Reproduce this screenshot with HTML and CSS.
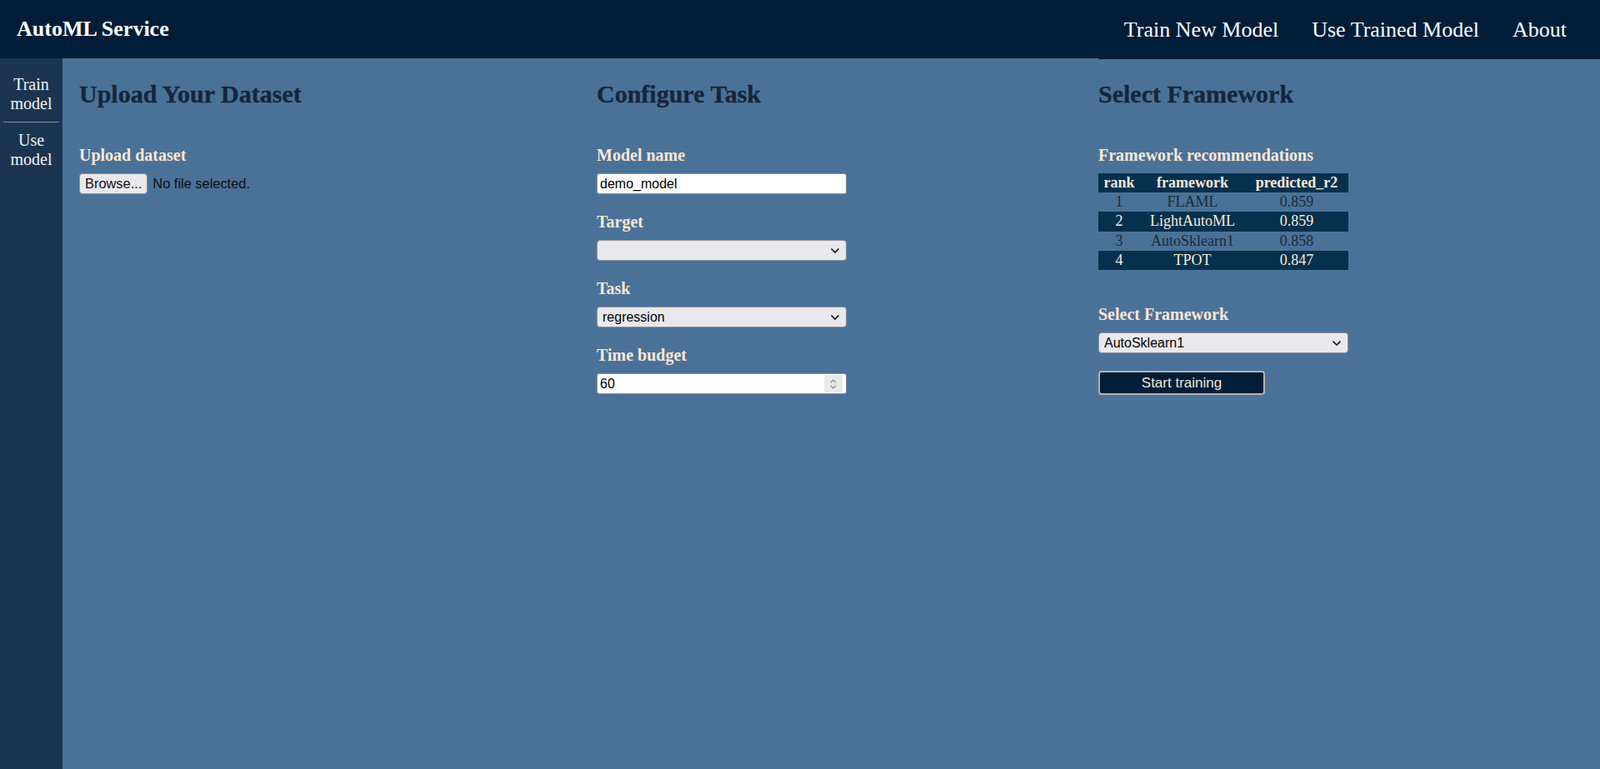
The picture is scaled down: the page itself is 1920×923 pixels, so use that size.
FILE: index.html
```html
<!DOCTYPE html>
<html lang="en">
<head>
<meta charset="utf-8">
<title>AutoML Service</title>
<link rel="stylesheet" href="styles.css">
</head>
<body>
<header class="topbar">
  <div class="brand">AutoML Service</div>
  <nav class="topnav">
    <a class="topnav-link" href="#">Train New Model</a>
    <a class="topnav-link" href="#">Use Trained Model</a>
    <a class="topnav-link" href="#">About</a>
  </nav>
</header>
<div class="layout">
  <aside class="sidebar">
    <a class="side-item side-item--sep" href="#">Train<br>model</a>
    <a class="side-item" href="#">Use<br>model</a>
  </aside>
  <main class="content">
    <section class="col">
      <h2 class="col-title">Upload Your Dataset</h2>
      <div class="field">
        <div class="field-label">Upload dataset</div>
        <div class="file-row">
          <button class="file-btn" type="button">Browse...</button>
          <span class="file-status">No file selected.</span>
        </div>
      </div>
    </section>
    <section class="col">
      <h2 class="col-title">Configure Task</h2>
      <div class="field">
        <div class="field-label">Model name</div>
        <input class="text-input" type="text" value="demo_model">
      </div>
      <div class="field">
        <div class="field-label">Target</div>
        <div class="select-wrap">
          <select class="select"><option></option></select>
          <svg class="select-arrow" width="12" height="8" viewBox="0 0 12 8"><path d="M1.5 1.5 L6 6 L10.5 1.5" fill="none" stroke="#111" stroke-width="1.6"/></svg>
        </div>
      </div>
      <div class="field">
        <div class="field-label">Task</div>
        <div class="select-wrap">
          <select class="select"><option>regression</option></select>
          <svg class="select-arrow" width="12" height="8" viewBox="0 0 12 8"><path d="M1.5 1.5 L6 6 L10.5 1.5" fill="none" stroke="#111" stroke-width="1.6"/></svg>
        </div>
      </div>
      <div class="field">
        <div class="field-label">Time budget</div>
        <div class="number-wrap">
          <input class="text-input number-input" type="text" value="60">
          <span class="spinner">
            <svg width="10" height="16" viewBox="0 0 10 16"><path d="M2 6 L5 3 L8 6" fill="none" stroke="#8a8a8a" stroke-width="1.2"/><path d="M2 10 L5 13 L8 10" fill="none" stroke="#8a8a8a" stroke-width="1.2"/></svg>
          </span>
        </div>
      </div>
    </section>
    <section class="col">
      <h2 class="col-title">Select Framework</h2>
      <div class="field">
        <div class="field-label">Framework recommendations</div>
        <table class="rec-table">
          <thead>
            <tr class="row-dark"><th class="c-rank">rank</th><th class="c-fw">framework</th><th class="c-r2">predicted_r2</th></tr>
          </thead>
          <tbody>
            <tr class="row-light"><td>1</td><td>FLAML</td><td>0.859</td></tr>
            <tr class="row-dark"><td>2</td><td>LightAutoML</td><td>0.859</td></tr>
            <tr class="row-light"><td>3</td><td>AutoSklearn1</td><td>0.858</td></tr>
            <tr class="row-dark"><td>4</td><td>TPOT</td><td>0.847</td></tr>
          </tbody>
        </table>
      </div>
      <div class="field field--spaced">
        <div class="field-label">Select Framework</div>
        <div class="select-wrap">
          <select class="select"><option>AutoSklearn1</option></select>
          <svg class="select-arrow" width="12" height="8" viewBox="0 0 12 8"><path d="M1.5 1.5 L6 6 L10.5 1.5" fill="none" stroke="#111" stroke-width="1.6"/></svg>
        </div>
        <button class="start-btn" type="button">Start training</button>
      </div>
    </section>
  </main>
</div>
</body>
</html>
```
FILE: styles.css
```css
html, body {
  margin: 0;
  padding: 0;
}
body {
  font-family: "Liberation Serif", "Times New Roman", serif;
  background: #4a7299;
  min-height: 923px;
  overflow: hidden;
}

.topbar {
  height: 70px;
  background: #011d38;
  display: flex;
  justify-content: space-between;
  align-items: center;
}
.brand {
  padding-left: 20px;
  font-size: 26px;
  font-weight: bold;
  color: #ffffff;
}
.topnav {
  align-self: flex-start;
  width: 602px;
  height: 71px;
  background: #011d38;
  display: flex;
  justify-content: flex-end;
  align-items: center;
  gap: 40px;
  padding-right: 40px;
  box-sizing: border-box;
}
.topnav-link {
  font-size: 26px;
  color: #ffffff;
  text-decoration: none;
}

.layout {
  display: flex;
  min-height: 853px;
}
.sidebar {
  width: 75px;
  flex: 0 0 75px;
  box-sizing: border-box;
  background: #1b3551;
  padding: 10px 4px 0;
  display: flex;
  flex-direction: column;
}
.side-item {
  display: block;
  padding: 10px 0;
  font-size: 20px;
  line-height: 23px;
  text-align: center;
  color: #f3f3f3;
  text-decoration: none;
}
.side-item--sep {
  border-bottom: 1px solid #8d8d8d;
}

.content {
  flex: 1;
  display: grid;
  grid-template-columns: 621px 602px 1fr;
  padding-left: 20px;
  align-items: start;
}
.col-title {
  margin: 26px 0 45px;
  font-size: 30px;
  line-height: 34px;
  font-weight: bold;
  color: #17253a;
  -webkit-text-stroke: 0.3px #17253a;
}
.field {
  margin-bottom: 22px;
}
.field--spaced {
  margin-top: 42px;
}
.field-label {
  font-size: 20px;
  line-height: 23px;
  font-weight: bold;
  color: #fce6d3;
  margin-bottom: 10px;
}

.file-row {
  display: flex;
  align-items: center;
  font-family: "Liberation Sans", Arial, sans-serif;
  font-size: 16.4px;
}
.file-btn {
  font-family: "Liberation Sans", Arial, sans-serif;
  font-size: 16.4px;
  line-height: 21px;
  padding: 1px 6px;
  height: 25px;
  border: 1px solid #8f8f9d;
  border-radius: 4px;
  background: #e9e9ed;
  color: #111;
}
.file-status {
  margin-left: 6px;
  color: #0c0c0c;
}

.text-input {
  display: block;
  width: 300px;
  height: 25px;
  box-sizing: border-box;
  padding: 2px 3px;
  border: 1px solid #8f8f9d;
  border-radius: 3px;
  background: #ffffff;
  font-family: "Liberation Sans", Arial, sans-serif;
  font-size: 16px;
  line-height: 19px;
  color: #000;
  outline: none;
}
.select-wrap, .number-wrap {
  position: relative;
  width: 300px;
}
.select {
  appearance: none;
  -webkit-appearance: none;
  display: block;
  width: 300px;
  height: 25px;
  box-sizing: border-box;
  padding: 2px 6px;
  border: 1px solid #8f8f9d;
  border-radius: 4px;
  background: #e9e9ed;
  font-family: "Liberation Sans", Arial, sans-serif;
  font-size: 16px;
  line-height: 19px;
  color: #000;
}
.select-arrow {
  position: absolute;
  right: 8px;
  top: 9px;
  pointer-events: none;
}
.number-input {
  padding-right: 26px;
}
.spinner {
  position: absolute;
  right: 5px;
  top: 2px;
  width: 22px;
  height: 21px;
  background: #e9e9ed;
  display: flex;
  align-items: center;
  justify-content: center;
}

.rec-table {
  width: 300px;
  border-collapse: collapse;
  table-layout: fixed;
  font-size: 18px;
  line-height: 21.2px;
}
.rec-table th, .rec-table td {
  padding: 1px 0;
  text-align: center;
}
.rec-table th {
  font-weight: bold;
}
.c-rank { width: 50px; }
.c-fw { width: 126px; }
.c-r2 { width: 124px; }
.row-dark {
  background: #05314e;
  color: #fbe9d9;
}
.row-light {
  color: #1b2939;
}

.start-btn {
  display: block;
  margin-top: 21px;
  width: 200px;
  height: 29px;
  box-sizing: border-box;
  background: #011d38;
  border: 2px solid #b3b3b3;
  border-radius: 4px;
  color: #f3e7da;
  font-family: "Liberation Sans", Arial, sans-serif;
  font-size: 17px;
  line-height: 23px;
  padding: 0;
}
```
